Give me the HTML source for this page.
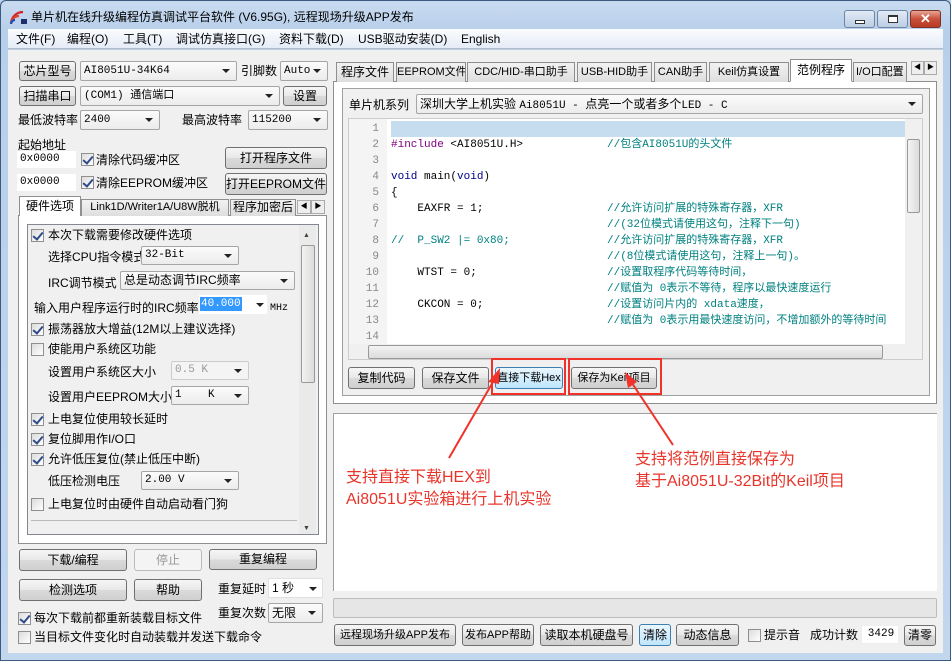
<!DOCTYPE html>
<html><head><meta charset="utf-8"><style>
*{box-sizing:border-box;margin:0;padding:0}
body{width:951px;height:661px;overflow:hidden;background:#bcd3ee;font-family:"Liberation Sans","Noto Sans CJK SC",sans-serif;font-size:12px;line-height:15px;color:#000;position:relative}
.a{position:absolute;white-space:nowrap}
.btn{position:absolute;border:1px solid #707070;border-radius:3px;background:linear-gradient(#f6f6f6,#e8e8e8 50%,#dadada 51%,#d0d0d0);text-align:center;font-size:12px;white-space:nowrap;overflow:hidden}
.combo{position:absolute;border:1px solid #a6a6a6;border-radius:2px;background:linear-gradient(#fbfbfb,#ececec);font-size:11px;font-family:"Liberation Mono","Noto Sans CJK SC",monospace;padding-left:3px;white-space:nowrap;overflow:hidden}
.combo:after{content:"";position:absolute;right:6px;top:50%;margin-top:-2px;border-left:4px solid transparent;border-right:4px solid transparent;border-top:4px solid #222}
.cb{position:absolute;width:13px;height:13px;border:1px solid #8f8f8f;background:linear-gradient(135deg,#dcdcdc,#fff)}
.cb.on:after{content:"";position:absolute;left:3px;top:0px;width:4px;height:8px;border:solid #2f4a8a;border-width:0 2px 2px 0;transform:rotate(40deg)}
.inp{position:absolute;background:#fff;border:1px solid #fff;font-family:"Liberation Mono",monospace;font-size:11px;padding-left:2px}
.tab{position:absolute;border:1px solid #8e8f8f;border-bottom:none;background:linear-gradient(#f2f2f2,#dedede);font-size:12px;text-align:center;white-space:nowrap;overflow:hidden}
.tab.act{background:#fff}
.code{position:absolute;font-family:"Liberation Mono","Noto Sans CJK SC",monospace;font-size:11px;white-space:pre;line-height:16px}
.cm{color:#008080}
.ln{position:absolute;left:0;width:30px;text-align:right;color:#888;font-family:"Liberation Mono",monospace;font-size:11px;line-height:16px}
.red{color:#e8352b;font-size:16px;line-height:20px;font-family:"Liberation Sans","Noto Sans CJK SC",sans-serif}
</style></head><body>
<div class="a" style="left:0;top:0;width:951px;height:661px;border:1px solid #3a5a80;border-radius:6px 6px 0 0;background:linear-gradient(#c9dbf0,#b8cfea 30px,#c2d6ee)"></div>
<svg class="a" style="left:10px;top:9px" width="18" height="16" viewBox="0 0 18 16"><path d="M1 15 A12 12 0 0 1 13 3" stroke="#d2232a" stroke-width="2.2" fill="none"/><path d="M1 15 A8 8 0 0 1 9 7" stroke="#e0402a" stroke-width="2.2" fill="none"/><path d="M1 15 A4 4 0 0 1 5 11" stroke="#1a4fb5" stroke-width="2.2" fill="none"/><rect x="11" y="10" width="6" height="5" fill="#1f2f6d"/></svg>
<div class="a" style="left:31px;top:10px;font-size:12px">单片机在线升级编程仿真调试平台软件 (V6.95G), 远程现场升级APP发布</div>
<div class="a" style="left:844px;top:10px;width:31px;height:18px;border:1px solid #6c85a6;border-radius:3px;background:linear-gradient(#e2ebf6,#bccde3)"><div class="a" style="left:10px;top:9px;width:10px;height:4px;border:1px solid #333;background:#fff"></div></div>
<div class="a" style="left:877px;top:10px;width:31px;height:18px;border:1px solid #6c85a6;border-radius:3px;background:linear-gradient(#e2ebf6,#bccde3)"><div class="a" style="left:10px;top:4px;width:10px;height:8px;border:1px solid #333;border-top-width:2px;background:#fff"></div></div>
<div class="a" style="left:910px;top:10px;width:31px;height:18px;border:1px solid #7a3328;border-radius:3px;background:linear-gradient(#e8a493,#c8503a 50%,#b93a22);color:#fff;font-weight:bold;text-align:center;font-size:13px;line-height:16px">✕</div>
<div class="a" style="left:8px;top:29px;width:935px;height:20px;background:linear-gradient(#fbfcfe,#e5ecf7);border-bottom:1px solid #b6bcc6"></div>
<div class="a" style="left:16px;top:32px">文件(F)</div>
<div class="a" style="left:67px;top:32px">编程(O)</div>
<div class="a" style="left:123px;top:32px">工具(T)</div>
<div class="a" style="left:176px;top:32px">调试仿真接口(G)</div>
<div class="a" style="left:279px;top:32px">资料下载(D)</div>
<div class="a" style="left:358px;top:32px">USB驱动安装(D)</div>
<div class="a" style="left:461px;top:32px">English</div>
<div class="a" style="left:8px;top:50px;width:935px;height:603px;background:#f0f0f0"></div>

<div class="btn" style="left:19px;top:61px;width:57px;height:20px;line-height:18px">芯片型号</div>
<div class="combo" style="left:80px;top:61px;width:157px;height:20px;line-height:18px">AI8051U-34K64</div>
<div class="a" style="left:241px;top:64px">引脚数</div>
<div class="combo" style="left:280px;top:61px;width:48px;height:20px;line-height:18px">Auto</div>
<div class="btn" style="left:19px;top:86px;width:57px;height:20px;line-height:18px">扫描串口</div>
<div class="combo" style="left:80px;top:86px;width:200px;height:20px;line-height:18px">(COM1) 通信端口</div>
<div class="btn" style="left:283px;top:86px;width:44px;height:20px;line-height:18px">设置</div>
<div class="a" style="left:18px;top:113px">最低波特率</div>
<div class="combo" style="left:80px;top:110px;width:80px;height:20px;line-height:18px">2400</div>
<div class="a" style="left:182px;top:113px">最高波特率</div>
<div class="combo" style="left:248px;top:110px;width:80px;height:20px;line-height:18px">115200</div>
<div class="a" style="left:18px;top:138px">起始地址</div>
<div class="inp" style="left:17px;top:151px;width:59px;height:17px;line-height:15px">0x0000</div>
<div class="cb on" style="left:81px;top:153px"></div>
<div class="a" style="left:96px;top:153px">清除代码缓冲区</div>
<div class="btn" style="left:225px;top:147px;width:102px;height:22px;line-height:20px">打开程序文件</div>
<div class="inp" style="left:17px;top:174px;width:59px;height:17px;line-height:15px">0x0000</div>
<div class="cb on" style="left:81px;top:176px"></div>
<div class="a" style="left:96px;top:176px">清除EEPROM缓冲区</div>
<div class="btn" style="left:225px;top:173px;width:102px;height:22px;line-height:20px">打开EEPROM文件</div>
<div class="a" style="left:18px;top:215px;width:309px;height:329px;border:1px solid #8e8f8f;background:#fff"></div>
<div class="tab act" style="left:19px;top:196px;width:62px;height:20px;line-height:18px;z-index:2">硬件选项</div>
<div class="tab" style="left:81px;top:199px;width:148px;height:17px;line-height:15px;font-size:11px">Link1D/Writer1A/U8W脱机</div>
<div class="tab" style="left:230px;top:199px;width:66px;height:17px;line-height:15px">程序加密后</div>
<div class="a" style="left:297px;top:200px;width:14px;height:14px;border:1px solid #aaa;background:#eee;font-size:7px;text-align:center;line-height:12px">◀</div>
<div class="a" style="left:311px;top:200px;width:14px;height:14px;border:1px solid #aaa;background:#eee;font-size:7px;text-align:center;line-height:12px">▶</div>
<div class="a" style="left:27px;top:224px;width:292px;height:311px;border:1px solid #828790;background:#f0f0f0"></div>
<div class="a" style="left:299px;top:225px;width:17px;height:309px;background:#eaeaea"></div>
<div class="a" style="left:301px;top:245px;width:14px;height:138px;border:1px solid #999;border-radius:2px;background:linear-gradient(90deg,#f3f3f3,#dcdcdc)"></div>
<div class="a" style="left:303px;top:228px;font-size:7px;color:#444">▲</div>
<div class="a" style="left:303px;top:521px;font-size:7px;color:#444">▼</div>
<div class="cb on" style="left:31px;top:229px"></div><div class="a" style="left:48px;top:228px">本次下载需要修改硬件选项</div>
<div class="a" style="left:48px;top:250px">选择CPU指令模式</div><div class="combo" style="left:141px;top:246px;width:98px;height:19px;line-height:17px">32-Bit</div>
<div class="a" style="left:48px;top:276px">IRC调节模式</div><div class="combo" style="left:120px;top:271px;width:175px;height:19px;line-height:17px;font-family:'Liberation Sans','Noto Sans CJK SC',sans-serif;font-size:12px">总是动态调节IRC频率</div>
<div class="a" style="left:34px;top:301px">输入用户程序运行时的IRC频率</div>
<div class="a" style="left:199px;top:295px;width:68px;height:19px;background:#fff"></div>
<div class="a" style="left:200px;top:297px;background:#3399ff;color:#fff;font-family:'Liberation Mono',monospace;font-size:11px;line-height:14px;padding:0 1px">40.000</div>
<div class="a" style="left:256px;top:303px;border-left:4px solid transparent;border-right:4px solid transparent;border-top:4px solid #222"></div>
<div class="a" style="left:270px;top:301px;font-size:10px;font-family:'Liberation Mono',monospace">MHz</div>
<div class="cb on" style="left:31px;top:323px"></div><div class="a" style="left:48px;top:322px">振荡器放大增益(12M以上建议选择)</div>
<div class="cb" style="left:31px;top:343px"></div><div class="a" style="left:48px;top:342px">使能用户系统区功能</div>
<div class="a" style="left:48px;top:365px">设置用户系统区大小</div><div class="combo" style="left:171px;top:361px;width:78px;height:19px;line-height:17px;color:#999;background:#f4f4f4;border-color:#ccc">0.5 K</div>
<div class="a" style="left:48px;top:390px">设置用户EEPROM大小</div><div class="combo" style="left:171px;top:386px;width:78px;height:19px;line-height:17px">1&nbsp;&nbsp;&nbsp;&nbsp;K</div>
<div class="cb on" style="left:31px;top:413px"></div><div class="a" style="left:48px;top:412px">上电复位使用较长延时</div>
<div class="cb on" style="left:31px;top:433px"></div><div class="a" style="left:48px;top:432px">复位脚用作I/O口</div>
<div class="cb on" style="left:31px;top:453px"></div><div class="a" style="left:48px;top:452px">允许低压复位(禁止低压中断)</div>
<div class="a" style="left:48px;top:474px">低压检测电压</div><div class="combo" style="left:141px;top:471px;width:98px;height:19px;line-height:17px">2.00 V</div>
<div class="cb" style="left:31px;top:498px"></div><div class="a" style="left:48px;top:497px">上电复位时由硬件自动启动看门狗</div>
<div class="a" style="left:31px;top:520px;width:266px;height:1px;background:#bbb"></div>
<div class="btn" style="left:19px;top:549px;width:108px;height:22px;line-height:20px">下载/编程</div>
<div class="btn" style="left:134px;top:549px;width:68px;height:22px;line-height:20px;color:#999;border-color:#bbb;background:#f4f4f4">停止</div>
<div class="btn" style="left:209px;top:549px;width:108px;height:21px;line-height:19px">重复编程</div>
<div class="btn" style="left:19px;top:579px;width:108px;height:22px;line-height:20px">检测选项</div>
<div class="btn" style="left:134px;top:579px;width:68px;height:22px;line-height:20px">帮助</div>
<div class="a" style="left:218px;top:582px">重复延时</div>
<div class="a" style="left:268px;top:578px;width:55px;height:20px;background:#fff;border:1px solid #e0e0e0;padding-left:3px;line-height:18px">1 秒<span class="a" style="right:5px;top:8px;border-left:4px solid transparent;border-right:4px solid transparent;border-top:4px solid #222"></span></div>
<div class="a" style="left:218px;top:606px">重复次数</div>
<div class="combo" style="left:268px;top:603px;width:55px;height:20px;line-height:18px;font-family:'Liberation Sans','Noto Sans CJK SC',sans-serif;font-size:12px">无限</div>
<div class="cb on" style="left:18px;top:612px"></div><div class="a" style="left:34px;top:611px">每次下载前都重新装载目标文件</div>
<div class="cb" style="left:18px;top:631px"></div><div class="a" style="left:34px;top:630px">当目标文件变化时自动装载并发送下载命令</div>

<div class="a" style="left:333px;top:81px;width:604px;height:323px;border:1px solid #8e8f8f;background:#fff"></div>
<div class="tab" style="left:336px;top:62px;width:58px;height:20px;line-height:18px">程序文件</div>
<div class="tab" style="left:396px;top:62px;width:70px;height:20px;line-height:18px;font-size:11px">EEPROM文件</div>
<div class="tab" style="left:467px;top:62px;width:108px;height:20px;line-height:18px;font-size:11px">CDC/HID-串口助手</div>
<div class="tab" style="left:577px;top:62px;width:75px;height:20px;line-height:18px;font-size:11px">USB-HID助手</div>
<div class="tab" style="left:654px;top:62px;width:53px;height:20px;line-height:18px;font-size:11px">CAN助手</div>
<div class="tab" style="left:709px;top:62px;width:80px;height:20px;line-height:18px;font-size:11px">Keil仿真设置</div>
<div class="tab act" style="left:790px;top:59px;width:62px;height:23px;line-height:20px;z-index:2;border-bottom:1px solid #fff">范例程序</div>
<div class="tab" style="left:853px;top:62px;width:54px;height:20px;line-height:18px;font-size:11px;text-align:left;padding-left:2px">I/O口配置</div>
<div class="a" style="left:911px;top:61px;width:13px;height:14px;border:1px solid #aaa;background:#eee;font-size:7px;text-align:center;line-height:12px">◀</div>
<div class="a" style="left:924px;top:61px;width:13px;height:14px;border:1px solid #aaa;background:#eee;font-size:7px;text-align:center;line-height:12px">▶</div>
<div class="a" style="left:342px;top:88px;width:588px;height:308px;border:1px solid #a0a0a0;background:#f0f0f0"></div>
<div class="a" style="left:349px;top:98px">单片机系列</div>
<div class="combo" style="left:416px;top:94px;width:507px;height:20px;line-height:18px;font-family:'Liberation Sans','Noto Sans CJK SC',sans-serif;font-size:12px">深圳大学上机实验 <span style="font-family:'Liberation Mono',monospace;font-size:11px">Ai8051U - </span>点亮一个或者多个<span style="font-family:'Liberation Mono',monospace;font-size:11px">LED - C</span></div>
<div class="a" style="left:348px;top:118px;width:575px;height:242px;background:#fff;border:1px solid #ccc;overflow:hidden">
 <div class="a" style="left:0;top:0;width:38px;height:242px;background:#f4f4f4"></div>
 <div class="a" style="left:42px;top:2px;width:514px;height:16px;background:#c6ddf0"></div>
 <div class="ln" style="top:2px">1<br>2<br>3<br>4<br>5<br>6<br>7<br>8<br>9<br>10<br>11<br>12<br>13<br>14</div>
 <div class="code" style="left:42px;top:2px"><br><span style="color:#800080">#include</span> &lt;AI8051U.H&gt;<br><br><span style="color:#00008b">void</span> main(<span style="color:#00008b">void</span>)<br>{<br>    EAXFR = 1;<br><br><span class="cm">//  P_SW2 |= 0x80;</span><br><br>    WTST = 0;<br><br>    CKCON = 0;</div>
 <div class="code cm" style="left:258px;top:2px;font-size:11px"><br>//包含AI8051U的头文件<br><br><br><br>//允许访问扩展的特殊寄存器，XFR<br>//(32位模式请使用这句，注释下一句)<br>//允许访问扩展的特殊寄存器，XFR<br>//(8位模式请使用这句，注释上一句)。<br>//设置取程序代码等待时间，<br>//赋值为 0表示不等待，程序以最快速度运行<br>//设置访问片内的 xdata速度，<br>//赋值为 0表示用最快速度访问，不增加额外的等待时间</div>
 <div class="a" style="left:556px;top:0;width:17px;height:226px;background:#f0f0f0"></div>
 <div class="a" style="left:558px;top:20px;width:13px;height:74px;border:1px solid #999;border-radius:2px;background:linear-gradient(90deg,#f3f3f3,#dcdcdc)"></div>
 <div class="a" style="left:0;top:225px;width:573px;height:16px;background:#f0f0f0"></div>
 <div class="a" style="left:19px;top:226px;width:515px;height:14px;border:1px solid #999;border-radius:2px;background:linear-gradient(#f3f3f3,#dcdcdc)"></div>
</div>
<div class="btn" style="left:348px;top:367px;width:67px;height:22px;line-height:20px">复制代码</div>
<div class="btn" style="left:422px;top:367px;width:67px;height:22px;line-height:20px">保存文件</div>
<div class="btn" style="left:495px;top:367px;width:68px;height:22px;line-height:20px;border-color:#3c7fb1;background:linear-gradient(#eaf6fd,#bee6fd);font-size:11px">直接下载Hex</div>
<div class="btn" style="left:571px;top:367px;width:86px;height:22px;line-height:20px;font-size:11px">保存为Keil项目</div>
<div class="a" style="left:491px;top:358px;width:75px;height:37px;border:2px solid #f0322b"></div>
<div class="a" style="left:568px;top:358px;width:94px;height:37px;border:2px solid #f0322b"></div>

<div class="a" style="left:333px;top:413px;width:604px;height:178px;background:#fff;border-top:1px solid #a0a0a0;border-left:1px solid #a0a0a0"></div>
<svg class="a" style="left:330px;top:360px" width="400" height="110" viewBox="330 360 400 110">
<path d="M449 458 L497 375" stroke="#f0322b" stroke-width="2"/><path d="M500 368 L488 382 L499 384 Z" fill="#f0322b"/>
<path d="M673 445 L630 380" stroke="#f0322b" stroke-width="2"/><path d="M625 372 L628 388 L637 382 Z" fill="#f0322b"/>
</svg>
<div class="a red" style="left:346px;top:468px">支持直接下载HEX到</div>
<div class="a red" style="left:346px;top:490px">Ai8051U实验箱进行上机实验</div>
<div class="a red" style="left:635px;top:450px">支持将范例直接保存为</div>
<div class="a red" style="left:635px;top:472px">基于Ai8051U-32Bit的Keil项目</div>
<div class="a" style="left:333px;top:598px;width:604px;height:20px;border:1px solid #bcbcbc;border-radius:2px;background:#e6e6e6"></div>
<div class="btn" style="left:334px;top:624px;width:122px;height:22px;line-height:20px;font-size:11px">远程现场升级APP发布</div>
<div class="btn" style="left:462px;top:624px;width:72px;height:22px;line-height:20px;font-size:11px">发布APP帮助</div>
<div class="btn" style="left:540px;top:624px;width:93px;height:22px;line-height:20px">读取本机硬盘号</div>
<div class="btn" style="left:639px;top:624px;width:32px;height:22px;line-height:20px;border-color:#3c7fb1;background:linear-gradient(#eaf6fd,#bee6fd)">清除</div>
<div class="btn" style="left:676px;top:624px;width:63px;height:22px;line-height:20px">动态信息</div>
<div class="cb" style="left:748px;top:629px"></div><div class="a" style="left:764px;top:628px">提示音</div>
<div class="a" style="left:810px;top:628px">成功计数</div>
<div class="inp" style="left:861px;top:625px;width:38px;height:19px;line-height:17px;text-align:center;border-color:#eee">3429</div>
<div class="btn" style="left:904px;top:625px;width:32px;height:21px;line-height:19px">清零</div>
</body></html>
